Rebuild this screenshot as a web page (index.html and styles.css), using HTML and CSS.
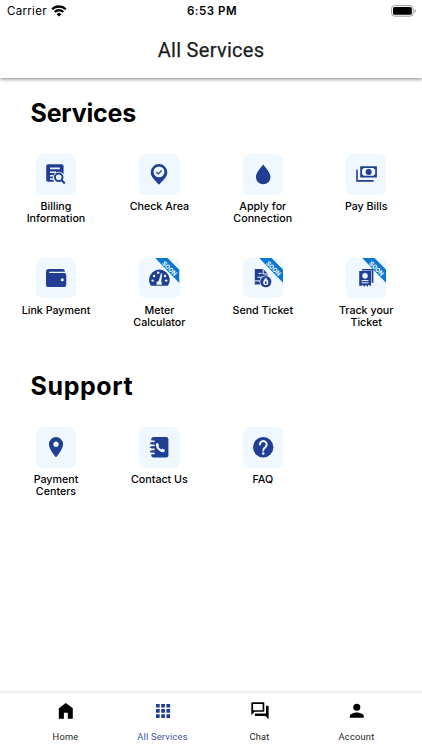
FILE: index.html
```html
<!DOCTYPE html>
<html lang="en">
<head>
<meta charset="utf-8">
<meta name="viewport" content="width=device-width, initial-scale=1">
<title>All Services</title>
<link rel="stylesheet" href="styles.css">
</head>
<body>
<svg class="defs" aria-hidden="true">
  <symbol id="soon" viewBox="0 0 40.5 40.5">
    <path d="M16.2 0H28.5L40.5 12V25.2z" fill="#0b78d0"/>
    <text x="30.6" y="12.6" transform="rotate(45 30.6 10.3)" class="soon-text">SOON</text>
  </symbol>
</svg>
<div class="app">
  <header class="header">
    <div class="status">
      <div class="carrier">Carrier
        <svg width="16" height="12" viewBox="0 0 16 12"><g fill="none" stroke="#000" stroke-width="2.3"><path d="M1.2 4.3a9.7 9.7 0 0 1 13.6 0"/><path d="M3.7 7a6.1 6.1 0 0 1 8.6 0"/></g><path d="M8 11.6 5.6 9.2a3.4 3.4 0 0 1 4.8 0z"/></svg>
      </div>
      <div class="time">6:53 PM</div>
      <svg class="battery" width="26" height="12" viewBox="0 0 26 12"><rect x=".6" y=".6" width="21.6" height="10.6" rx="3" fill="#fff" stroke="#999"/><rect x="2" y="2" width="18.8" height="7.8" rx="1.6"/><path d="M23.6 4v4q1.3-.5 1.3-2t-1.3-2" fill="#999"/></svg>
    </div>
    <h1 class="title">All Services</h1>
  </header>

  <main class="content">
    <h2 class="heading">Services</h2>
    <div class="grid">
      <a class="service"><svg class="tile" viewBox="0 0 40.5 40.5"><path d="M12 10.2h13.8a1.8 1.8 0 0 1 1.8 1.8v8a5.7 5.7 0 0 0-9.3 7.8H12a1.8 1.8 0 0 1-1.8-1.8V12a1.8 1.8 0 0 1 1.8-1.8"/><path class="light-line" d="M14 14.4h9.8M14 18.2h6M14 21.8h3M14 25h3"/><circle class="line" cx="22.7" cy="23.3" r="3.8"/><path class="line" d="m25.5 26.1 3.3 3.4"/></svg><span class="label">Billing<br>Information</span></a>
      <a class="service"><svg class="tile" viewBox="0 0 40.5 40.5"><path d="M20 10.1a8.2 8.2 0 0 0-8.3 8.2c0 4.6 4.1 7.8 8.3 12.4 4.2-4.6 8.3-7.8 8.3-12.4a8.2 8.2 0 0 0-8.3-8.2"/><circle class="light" cx="20" cy="17.9" r="5.4"/><path d="m17.3 17.9 2 2 3.4-3.5" fill="none" stroke="#213f92" stroke-width="1.3"/></svg><span class="label">Check Area</span></a>
      <a class="service"><svg class="tile" viewBox="0 0 40.5 40.5"><path d="M20.2 10.6c-2.4 3.1-7.3 8.3-7.3 12.4a7.3 7.3 0 0 0 14.6 0c0-4.1-4.9-9.3-7.3-12.4"/></svg><span class="label">Apply for<br>Connection</span></a>
      <a class="service"><svg class="tile" viewBox="0 0 40.5 40.5"><path d="M14.2 12.3h16.7v11.2H14.2z"/><path class="light" d="M17.5 14.1h10.2a1.6 1.6 0 0 0 1.5 1.5v4.6a1.6 1.6 0 0 0-1.5 1.5H17.5a1.6 1.6 0 0 0-1.5-1.5v-4.6a1.6 1.6 0 0 0 1.5-1.5"/><circle cx="22.6" cy="17.9" r="3"/><path d="M11 15.8v11.1h16.6" fill="none" stroke="#213f92" stroke-width="1.6"/></svg><span class="label">Pay Bills</span></a>
      <a class="service"><svg class="tile" viewBox="0 0 40.5 40.5"><path d="M12.8 11h14a2 2 0 0 1 2 2v.7H13.2v1.2h15.1a2 2 0 0 1 2 2v10a2 2 0 0 1-2 2H12a2 2 0 0 1-2-2V13.8a2.8 2.8 0 0 1 2.8-2.8"/><circle class="light" cx="26.3" cy="21.7" r="1.5"/></svg><span class="label">Link Payment</span></a>
      <a class="service"><svg class="tile" viewBox="0 0 40.5 40.5"><path d="M11.8 27.8A10.4 10.4 0 1 1 29 27.8z"/><g class="light"><circle cx="13.6" cy="22.6" r="1.2"/><circle cx="15.1" cy="18" r="1.2"/><circle cx="19.2" cy="14.8" r="1.2"/><circle cx="26" cy="18" r="1.2"/><circle cx="27.2" cy="22.6" r="1.2"/><path d="m22 15.2 1.2.3-1 8.3a2.5 2.5 0 0 1 .4 3h-4.8a2.5 2.5 0 0 1 1.9-3.8z"/></g><use href="#soon"/></svg><span class="label">Meter<br>Calculator</span></a>
      <a class="service"><svg class="tile" viewBox="0 0 40.5 40.5"><path d="M11.8 11h8.3l4.4 4.5v5h-5l-2 6H11.8z"/><path class="light-line thin" d="M15.5 15.4h3.2M14.5 19.2h6M11.8 22.9h5.5M20.2 11v5h4.6"/><circle class="light" cx="22.8" cy="23.7" r="6.3"/><circle cx="22.8" cy="23.7" r="5.6"/><path class="light" d="M22.8 19.5c-1.3 1.8-2.6 3.2-2.6 5a2.6 2.6 0 0 0 5.2 0c0-1.8-1.3-3.2-2.6-5"/><path d="M22.8 22.7c-1.3 1.6-1.3 3.2 0 3.2s1.3-1.6 0-3.2"/><use href="#soon"/></svg><span class="label">Send Ticket</span></a>
      <a class="service"><svg class="tile" viewBox="0 0 40.5 40.5"><path d="M16 11h11.4v13.7h-1.8V12.4H16z"/><path d="M13.2 13h11.8v14.8h-1.5v-.8h-1.4v1.6h-1.5v-1.4h-1.5v1.4h-1.5v-1.4h-1.4v.6h-3z"/><path class="light" d="m19 14.6 1 .8 1.3.1.1 1.3.7 1-.7 1-.1 1.3-1.3.1-1 .9-1-.9-1.2-.1-.2-1.3-.7-1 .7-1 .2-1.3 1.2-.1z"/><path class="light-line thin" d="M15.5 22.6h7M15.5 24.8h7"/><use href="#soon"/></svg><span class="label">Track your<br>Ticket</span></a>
    </div>

    <h2 class="heading support">Support</h2>
    <div class="grid">
      <a class="service"><svg class="tile" viewBox="0 0 40.5 40.5"><path d="M20 10.1a7.1 7.1 0 0 0-7.1 7.1c0 5.3 7.1 13 7.1 13s7.1-7.7 7.1-13a7.1 7.1 0 0 0-7.1-7.1"/><circle class="light" cx="20" cy="17.2" r="2.6"/></svg><span class="label">Payment<br>Centers</span></a>
      <a class="service"><svg class="tile" viewBox="0 0 40.5 40.5"><path d="M14.5 10.1h12.7a2.2 2.2 0 0 1 2.2 2.2v15.9a2.2 2.2 0 0 1-2.2 2.2H14.5a2.2 2.2 0 0 1-2.2-2.2V12.3a2.2 2.2 0 0 1 2.2-2.2"/><path class="light-line" d="M11.4 14.4h4.2M11.4 18.4h4.2M11.4 22.4h4.2M11.4 26.4h4.2"/><path d="M10.9 15.4h3.8v1.3h-3.8zM10.9 19.7h3.8V21h-3.8zM10.9 24h3.8v1.3h-3.8z"/><path class="light" d="m18.5 15.8 1.7 2.5-.8 1.1q.9 2 3 3l1-.8 2.7 1.5q-.3 2.2-2 2.1c-4.2-.5-7.2-4-7.3-7.7q.3-1.2 1.7-1.7"/></svg><span class="label">Contact Us</span></a>
      <a class="service"><svg class="tile" viewBox="0 0 40.5 40.5"><circle cx="20.2" cy="20.3" r="10.2"/><path class="light-line round" d="M16.9 17.4a3.4 3.4 0 1 1 5.5 2.7c-1.5 1.1-2.2 1.7-2.2 3.4"/><circle class="light" cx="20.2" cy="26.6" r="1.25"/></svg><span class="label">FAQ</span></a>
    </div>
  </main>

  <nav class="nav">
    <a class="nav-item"><svg width="20" height="20" viewBox="0 0 20 20"><path d="M2.8 17.7V7.3L9.8 2l7 5.3v10.4h-5v-5.9H7.9v5.9z"/></svg><span>Home</span></a>
    <a class="nav-item active"><svg width="20" height="20" viewBox="0 0 20 20"><path d="M3 2.9h3.7v3.7H3zM8.2 2.9h3.7v3.7H8.2zM13.4 2.9h3.7v3.7h-3.7zM3 8.1h3.7v3.7H3zM8.2 8.1h3.7v3.7H8.2zM13.4 8.1h3.7v3.7h-3.7zM3 13.3h3.7V17H3zM8.2 13.3h3.7V17H8.2zM13.4 13.3h3.7V17h-3.7z"/></svg><span>All Services</span></a>
    <a class="nav-item"><svg width="20" height="20" viewBox="0 0 20 20"><path fill-rule="evenodd" d="M2.2 1.2h11.2a.9.9 0 0 1 .9.9v7.8a.9.9 0 0 1-.9.9H4.6l-3.3 3.3v-12a.9.9 0 0 1 .9-.9m.9 1.7v6.4h9.5V2.9zM16 4.7h1.7a.9.9 0 0 1 .9.9v12.7l-3.2-3.2H5.8a.9.9 0 0 1-.9-.9v-1.7H16z"/></svg><span>Chat</span></a>
    <a class="nav-item"><svg width="20" height="20" viewBox="0 0 20 20"><circle cx="9.8" cy="6.3" r="3.5"/><path d="M2.8 16.8v-1.7c0-2.4 4.7-3.6 7-3.6s7 1.2 7 3.6v1.7z"/></svg><span>Account</span></a>
  </nav>
</div>
</body>
</html>
```
FILE: styles.css
```css
* { box-sizing: border-box; }
body { margin: 0; background: #fff; color: #000; font-family: Inter, sans-serif; }
.defs { display: none; }
.app { height: 750px; display: flex; flex-direction: column; overflow: hidden; }

.header { height: 78px; flex: none; box-shadow: 0 1px 4px rgba(0, 0, 0, .5); }
.status { height: 22px; padding: 0 5px 0 7px; display: grid; grid-template-columns: 1fr auto 1fr; align-items: center; font-size: 11.5px; }
.carrier { display: flex; align-items: center; gap: 4px; letter-spacing: .3px; }
.time { font-weight: 600; letter-spacing: .5px; }
.battery { justify-self: end; }
.title { margin: 16px 0 0; text-align: center; font: 400 20px/24px Roboto, sans-serif; letter-spacing: .3px; color: #1d1d1d; -webkit-text-stroke: .25px #1d1d1d; }

.content { flex: 1; }
.heading { margin: 20px 0 26px 30.5px; font-size: 25px; line-height: 30px; font-weight: 700; letter-spacing: -.2px; }
.support { margin-top: 10px; letter-spacing: .6px; }
.grid { display: grid; grid-template-columns: repeat(4, 103.4px); grid-auto-rows: 103.5px; padding-left: 4.3px; }
.service { display: flex; flex-direction: column; align-items: center; }
.tile { width: 40.5px; height: 40.5px; border-radius: 7px; background: #eff8fe; fill: #213f92; }
.label { margin-top: 6.5px; text-align: center; font-size: 10.7px; line-height: 12px; font-weight: 500; white-space: nowrap; }
.light { fill: #eff8fe; }
.light-line { fill: none; stroke: #eff8fe; stroke-width: 1.6; }
.thin { stroke-width: 1; }
.round { stroke-width: 2; stroke-linecap: round; }
.line { fill: none; stroke: #213f92; stroke-width: 2; }
.soon-text { fill: #fff; font: 700 6px Inter, sans-serif; text-anchor: middle; }

.nav { height: 59px; flex: none; border-top: 2px solid #eee; padding: 8px 17px 0; display: grid; grid-template-columns: repeat(4, 97px); }
.nav-item { display: flex; flex-direction: column; align-items: center; gap: 10px; font: 9.3px/12px Roboto, sans-serif; letter-spacing: .2px; color: #1d1d1d; }
.nav-item svg { fill: #000; }
.nav-item.active { color: #3c55a2; }
.nav-item.active svg { fill: #213f92; }
```
